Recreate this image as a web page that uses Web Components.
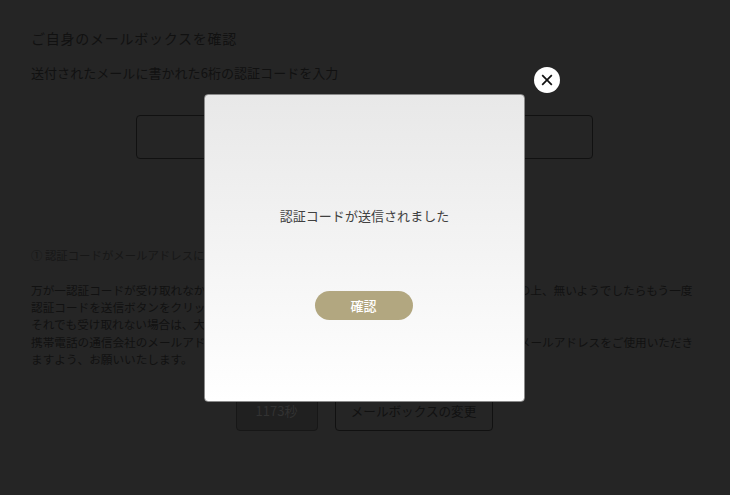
<!DOCTYPE html>
<html lang="ja">
<head>
<meta charset="utf-8">
<title>メールボックスを確認</title>
<style>
  html, body { margin: 0; height: 100%; }
  body { font-family: "Noto Sans CJK JP", "Noto Sans", sans-serif; overflow: hidden; }
</style>
</head>
<body>
<verify-page>
  <verify-heading>ご自身のメールボックスを確認</verify-heading>
  <p slot="lead">送付されたメールに書かれた6桁の認証コードを入力</p>
  <span slot="note">① 認証コードがメールアドレスに届かない場合</span>
  <span slot="help">万が一認証コードが受け取れなかった場合は、迷惑メールフォルダに入っていないかをご確認の上、無いようでしたらもう一度<br>認証コードを送信ボタンをクリックしてください。<br>それでも受け取れない場合は、大変お手数ですがお問い合わせください。<br>携帯電話の通信会社のメールアドレスでは受信できない場合がございますので、パソコン用のメールアドレスをご使用いただき<br>ますよう、お願いいたします。</span>
  <outline-button slot="actions" muted style="width:82px">1173秒</outline-button>
  <outline-button slot="actions" style="width:158px">メールボックスの変更</outline-button>
</verify-page>
<notice-modal>
  認証コードが送信されました
  <pill-button slot="action">確認</pill-button>
</notice-modal>
<script>
class VerifyHeading extends HTMLElement {
  constructor() {
    super();
    this.attachShadow({ mode: 'open' });
    this.shadowRoot.innerHTML = `
      <style>
        :host { display: block; font-size: 14px; letter-spacing: .75px; line-height: 20px; color: #111; }
      </style>
      <slot></slot>`;
  }
}
customElements.define('verify-heading', VerifyHeading);

class OutlineButton extends HTMLElement {
  constructor() {
    super();
    this.attachShadow({ mode: 'open' });
    this.shadowRoot.innerHTML = `
      <style>
        :host {
          display: flex; align-items: center; justify-content: center; box-sizing: border-box;
          height: 42px; border: 1px solid #111; border-radius: 4px;
          font-size: 12.6px; color: #111;
        }
        :host([muted]) { background: #202020; color: #323232; border-color: #171717; font-size: 13px; }
      </style>
      <slot></slot>`;
  }
}
customElements.define('outline-button', OutlineButton);

class VerifyPage extends HTMLElement {
  constructor() {
    super();
    this.attachShadow({ mode: 'open' });
    this.shadowRoot.innerHTML = `
      <style>
        :host {
          display: flex; flex-direction: column; box-sizing: border-box;
          height: 495px; padding: 28px 37px 0 31px; background: #252525; color: #111;
        }
        .lead { margin-top: 15px; font-size: 13px; line-height: 20px; letter-spacing: .05px; }
        ::slotted(p) { margin: 0; }
        .field {
          align-self: center; box-sizing: border-box; width: 457px; height: 44px;
          margin: 32px 0 0 4px; border: 1px solid #111; border-radius: 4px;
        }
        .note { margin-top: 87px; font-size: 11.4px; line-height: 18px; color: #171717; }
        .help { margin-top: 17px; font-size: 11.64px; line-height: 17.2px; white-space: nowrap; }
        .actions { display: flex; justify-content: center; gap: 17px; margin-top: 22px; padding-left: 4px; }
      </style>
      <slot></slot>
      <div class="lead"><slot name="lead"></slot></div>
      <div class="field"></div>
      <div class="note"><slot name="note"></slot></div>
      <div class="help"><slot name="help"></slot></div>
      <div class="actions"><slot name="actions"></slot></div>`;
  }
}
customElements.define('verify-page', VerifyPage);

class PillButton extends HTMLElement {
  constructor() {
    super();
    this.attachShadow({ mode: 'open' });
    this.shadowRoot.innerHTML = `
      <style>
        :host {
          display: flex; align-items: center; justify-content: center;
          width: 98px; height: 29px; border-radius: 15px; background: #b2a780;
          color: #fff; font-size: 13px; font-weight: 500;
        }
      </style>
      <slot></slot>`;
  }
}
customElements.define('pill-button', PillButton);

class NoticeModal extends HTMLElement {
  constructor() {
    super();
    this.attachShadow({ mode: 'open' });
    this.shadowRoot.innerHTML = `
      <style>
        :host { position: absolute; left: 204px; top: 94px; display: block; }
        .box {
          display: flex; flex-direction: column; align-items: center; box-sizing: border-box;
          width: 321px; height: 308px; padding-top: 111px;
          border: 1px solid #8a8a8a; border-radius: 4px;
          background: linear-gradient(#e8e8e8, #ffffff);
          color: #404040; font-size: 13px; line-height: 20px; letter-spacing: .05px;
        }
        .action { margin: 65px 2px 0 0; }
        .close {
          position: absolute; left: 330px; top: -27px; width: 26px; height: 26px;
          border-radius: 50%; background: #fff;
          display: flex; align-items: center; justify-content: center;
        }
      </style>
      <div class="box">
        <slot></slot>
        <div class="action"><slot name="action"></slot></div>
      </div>
      <div class="close">
        <svg width="12" height="12" viewBox="0 0 12 12" fill="none" stroke="#111" stroke-width="1.7">
          <path d="M1.2 1.2 10.8 10.8M10.8 1.2 1.2 10.8"/>
        </svg>
      </div>`;
  }
}
customElements.define('notice-modal', NoticeModal);
</script>
</body>
</html>
